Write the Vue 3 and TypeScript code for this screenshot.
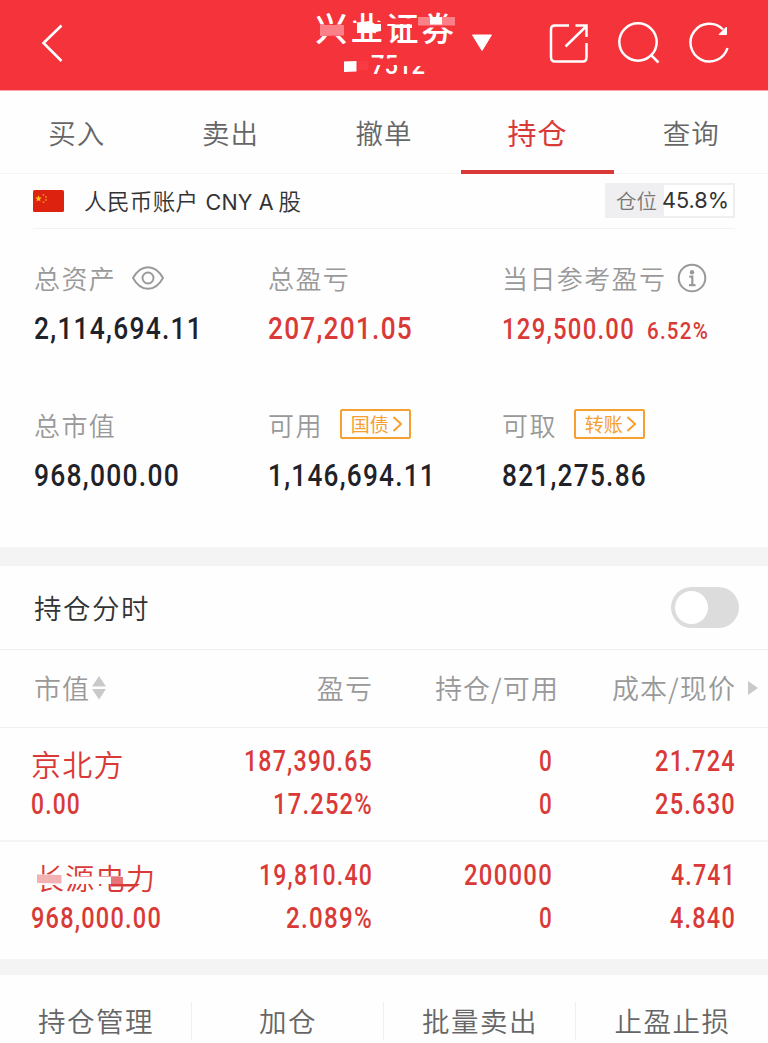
<script setup lang="ts">
interface Figure {
  text: string
  width: number
  height: number
}

interface SummaryItem {
  label: string
  icon?: 'eye' | 'info'
  link?: string
  tone: 'dark' | 'red'
  figures: Figure[]
}

interface Holding {
  name: string
  masked: boolean
  value: Figure
  columns: Figure[][]
}

const tabs: string[] = ['买入', '卖出', '撤单', '持仓', '查询']
const activeTab = '持仓'
const actions: string[] = ['持仓管理', '加仓', '批量卖出', '止盈止损']

const fig = (text: string, width: number, height = 20.5): Figure => ({ text, width, height })

const summary: SummaryItem[] = [
  { label: '总资产', icon: 'eye', tone: 'dark', figures: [fig('2,114,694.11', 169, 22.5)] },
  { label: '总盈亏', tone: 'red', figures: [fig('207,201.05', 145, 22.5)] },
  { label: '当日参考盈亏', icon: 'info', tone: 'red', figures: [fig('129,500.00', 133, 20.5), fig('6.52%', 62, 17.5)] },
  { label: '总市值', tone: 'dark', figures: [fig('968,000.00', 146, 22.5)] },
  { label: '可用', link: '国债', tone: 'dark', figures: [fig('1,146,694.11', 168, 22.5)] },
  { label: '可取', link: '转账', tone: 'dark', figures: [fig('821,275.86', 145, 22.5)] },
]

const holdings: Holding[] = [
  {
    name: '京北方',
    masked: false,
    value: fig('0.00', 50),
    columns: [
      [fig('187,390.65', 129), fig('17.252%', 100)],
      [fig('0', 14), fig('0', 14)],
      [fig('21.724', 81), fig('25.630', 81)],
    ],
  },
  {
    name: '长源电力',
    masked: true,
    value: fig('968,000.00', 131),
    columns: [
      [fig('19,810.40', 114), fig('2.089%', 87)],
      [fig('200000', 89), fig('0', 14)],
      [fig('4.741', 65), fig('4.840', 66)],
    ],
  },
]
</script>

<template>
  <div class="page">
    <header class="top">
      <svg class="back" width="24" height="42" viewBox="0 0 24 42">
        <path d="M21.500 5.500 3.500 23 21.500 41" fill="none" stroke="#fff" stroke-width="2.600" />
      </svg>
      <div class="broker">
        <div class="broker-name">兴业证券</div>
        <svg class="broker-no" width="56" height="18">
          <text x="0" y="18" textLength="54" lengthAdjust="spacingAndGlyphs" font-size="25">7512</text>
        </svg>
        <svg class="mask" width="150" height="80" viewBox="310 0 150 80">
          <g fill="#f5333b">
            <path d="M315 24.500h32v11.500h-32zM352 14h7v4h-7zM352 23h5v15h-5zM376 22h8v5h-8zM377 33h8v5h-8z" />
            <path d="M386 18.500h34v5.500h-34zM410 24h7v6h-7z" />
            <path d="M418 24.500h38v3h-38z" />
            <path d="M368 58.500h60v6.500h-60zM397 54h30v12h-30z" />
          </g>
          <path d="M320 25h24v10.500l-24 .5z" fill="#fb8087" />
          <path d="M357 22.500 370 21l5 3h6v7l-11 2-13 0z" fill="#fff" />
          <path d="M394 24.500h18v3.500h-18z" fill="#fff" />
          <path d="M418 17h37v8.500h-37z" fill="#fb8087" />
          <path d="M430 17h12v7.500h-12z" fill="#fff" />
          <path d="M344 61.500 356.500 61v10.500L344 72z" fill="#fff" />
          <path d="M358 61h10v9h-10z" fill="#f83b43" />
        </svg>
      </div>
      <svg class="caret" width="22" height="18" viewBox="0 0 22 18">
        <path d="M1.500 1h19L11 16.500z" fill="#fff" stroke="#fff" stroke-width="1" stroke-linejoin="round" />
      </svg>
      <svg class="tools" width="182" height="46" viewBox="548 20 182 46" fill="none" stroke="#fff" stroke-width="2.500">
        <path d="M569 25.500H555q-4 0-4 4V57q0 4.500 4 4.500h28q3.500 0 3.500-4.500V43" />
        <path d="M575.500 25.500h11V37M586 26.500 565.500 46.500" />
        <circle cx="638" cy="42" r="18.700" />
        <path d="m651 55 7.500 7.500" />
        <path d="M727.500 48a18.900 18.900 0 1 1-4.500-18.500" />
        <path d="M726.500 27v7.500H719z" fill="#fff" stroke-width="1" />
      </svg>
    </header>

    <nav class="tabs">
      <div v-for="t in tabs" :key="t" class="tab" :class="{ active: t === activeTab }">{{ t }}</div>
    </nav>

    <section class="account">
      <svg class="flag" width="31" height="22" viewBox="0 0 31 22">
        <rect width="31" height="22" rx="1.500" fill="#dd2310" />
        <path d="m5.500 5.300.9 2.200 2.400.1-1.900 1.600.6 2.400-2-1.300-2 1.300.6-2.400-1.900-1.600 2.400-.1z" fill="#ffc21a" />
        <g fill="#f08a1c">
          <circle cx="10.500" cy="5" r=".9" /><circle cx="13" cy="7" r=".9" />
          <circle cx="13" cy="10" r=".9" /><circle cx="10.500" cy="12.200" r=".9" />
        </g>
      </svg>
      <span class="account-name">人民币账户</span>
      <span class="account-type"><span class="latin">CNY A</span>股</span>
      <div class="ratio">
        <span class="ratio-label">仓位</span>
        <span class="ratio-value">45.8%</span>
      </div>
    </section>

    <section class="summary">
      <div v-for="s in summary" :key="s.label" class="cell">
        <div class="cell-head">
          <span class="cell-label">{{ s.label }}</span>
          <svg v-if="s.icon === 'eye'" class="eye" width="32" height="24" viewBox="0 0 32 24" fill="none" stroke="#999" stroke-width="1.900">
            <path d="M1 12Q7 1.200 16 1.200T31 12Q25 22.800 16 22.800T1 12z" />
            <circle cx="16" cy="12" r="5.500" />
          </svg>
          <svg v-if="s.icon === 'info'" class="info" width="30" height="30" viewBox="0 0 30 30">
            <circle cx="15" cy="15" r="13.300" fill="none" stroke="#999" stroke-width="2" />
            <circle cx="15" cy="9.300" r="2.200" fill="#999" />
            <path d="M12.300 13.700h3v8M12 22.200h6.500" fill="none" stroke="#999" stroke-width="2.200" />
          </svg>
          <span v-if="s.link" class="link">
            {{ s.link }}
            <svg width="11" height="18" viewBox="0 0 11 18">
              <path d="m1.500 2 7.500 7-7.500 7" fill="none" stroke="#f5a031" stroke-width="2" />
            </svg>
          </span>
        </div>
        <div class="figures" :class="s.tone">
          <svg v-for="f in s.figures" :key="f.text" class="num" :width="f.width" :height="f.height">
            <text x="0" :y="f.height" :textLength="f.width" lengthAdjust="spacingAndGlyphs" :font-size="f.height / 0.711">{{ f.text }}</text>
          </svg>
        </div>
      </div>
    </section>

    <section class="switch-row">
      <span>持仓分时</span>
      <div class="switch"><div class="knob"></div></div>
    </section>

    <section class="table-head">
      <div class="th first">
        市值
        <svg class="sort" width="14" height="24" viewBox="0 0 14 24" fill="#c9c9c9">
          <path d="M7 0l7 10.500H0zM0 13h14L7 23.500z" />
        </svg>
      </div>
      <div class="th">盈亏</div>
      <div class="th">持仓/可用</div>
      <div class="th">成本/现价</div>
      <svg class="more" width="10" height="14" viewBox="0 0 10 14"><path d="M0 0l10 7-10 7z" fill="#c9c9c9" /></svg>
    </section>

    <section v-for="h in holdings" :key="h.name" class="holding">
      <div class="stock">
        <div class="stock-name" :class="{ masked: h.masked }">
          {{ h.name }}
          <svg v-if="h.masked" class="stock-mask" width="125" height="36" viewBox="31 861 125 36">
            <path d="M31 874.500h31l2 2h58v7.500H66l-4 1H31z" fill="#fefefe" />
            <path d="M37 874.500 61.500 875v8.500L37 883z" fill="#f2b1b3" />
            <path d="M111 877h12v7h-12z" fill="#e57578" />
            <path d="M111 884h29l-3 2.500h-26z" fill="#d93a38" />
          </svg>
        </div>
        <svg class="num" :width="h.value.width" :height="h.value.height">
          <text x="0" :y="h.value.height" :textLength="h.value.width" lengthAdjust="spacingAndGlyphs" :font-size="h.value.height / 0.711">{{ h.value.text }}</text>
        </svg>
      </div>
      <div v-for="(col, i) in h.columns" :key="i" class="pair">
        <svg v-for="(f, j) in col" :key="j" class="num" :width="f.width" :height="f.height">
          <text x="0" :y="f.height" :textLength="f.width" lengthAdjust="spacingAndGlyphs" :font-size="f.height / 0.711">{{ f.text }}</text>
        </svg>
      </div>
    </section>

    <footer class="actions">
      <div v-for="a in actions" :key="a" class="action">{{ a }}</div>
    </footer>
  </div>
</template>

<style>
body {
  background: #fff;
}
</style>

<style scoped>
.page {
  width: 768px;
  height: 1043px;
  overflow: hidden;
  background: #fefefe;
  font-family: "Noto Sans CJK SC", sans-serif;
  font-weight: 350;
  box-sizing: border-box;
  white-space: nowrap;
}
.page * {
  box-sizing: border-box;
}
.page svg {
  display: block;
  flex: none;
}
.top {
  height: 91px;
  background: #f5333b;
  border-bottom: 1px solid #f9a5ae;
  display: flex;
  align-items: flex-start;
}
.back {
  margin: 20px 0 0 40px;
}
.broker {
  position: relative;
  width: 150px;
  height: 80px;
  margin-left: 246px;
  color: #fff;
}
.broker-name {
  height: 56px;
  line-height: 53px;
  padding-left: 5px;
  font-size: 32.500px;
  font-weight: 500;
  letter-spacing: 3px;
}
.page .broker-no {
  margin-left: 61px;
  overflow: visible;
  font-family: Roboto, sans-serif;
  font-weight: 500;
  fill: #fff;
}
.mask {
  position: absolute;
  left: 0;
  top: 0;
}
.caret {
  margin: 34px 0 0 11px;
}
.tools {
  margin: 20px 0 0 55px;
}
.tabs {
  height: 83px;
  display: grid;
  grid-template-columns: repeat(5, 1fr);
  border-bottom: 1px solid #f5f5f5;
}
.tab {
  height: 83px;
  line-height: 82px;
  text-align: center;
  font-size: 27.500px;
  letter-spacing: 1px;
  color: #666;
}
.tab.active {
  color: #d93a38;
  font-size: 29px;
  font-weight: 400;
  border-bottom: 4px solid #d93a38;
}
.account {
  height: 55px;
  margin: 0 33px;
  display: flex;
  align-items: center;
  border-bottom: 1px solid #f1f1f1;
  color: #333;
}
.flag {
  margin-bottom: 1px;
}
.account-name {
  margin: 0 0 2px 20px;
  font-size: 22.500px;
  letter-spacing: 0.400px;
}
.account-type {
  margin: 0 0 2px 7px;
  font-size: 22.500px;
}
.latin {
  display: inline-block;
  width: 73px;
  font-family: Inter, sans-serif;
  font-size: 21.500px;
  font-weight: 400;
  letter-spacing: 0.200px;
}
.ratio {
  margin: 0 0 2px auto;
  width: 130px;
  height: 35px;
  border: 2px solid #efeff2;
  background: #fff;
  display: flex;
  align-items: center;
  line-height: 31px;
}
.ratio-label {
  width: 57px;
  padding-left: 9px;
  background: #efeff2;
  font-size: 20.500px;
  color: #777;
}
.ratio-value {
  margin-left: -2px;
  font-family: Inter, sans-serif;
  font-size: 21.700px;
  font-weight: 400;
}
.summary {
  height: 318px;
  padding: 31px 0 0 34px;
  display: grid;
  grid-template-columns: 234px 234px 1fr;
  grid-auto-rows: 147px;
}
.cell-head {
  height: 36px;
  display: flex;
  align-items: center;
  color: #999;
}
.cell-label {
  margin-bottom: 2px;
  font-size: 26px;
  letter-spacing: 1.400px;
}
.eye {
  margin-left: 16px;
}
.info {
  margin-left: 11px;
}
.link {
  display: flex;
  align-items: center;
  justify-content: space-between;
  width: 71px;
  height: 30px;
  margin: 0 0 3px 17px;
  padding: 0 6px 0 9px;
  border: 2px solid #f5a031;
  border-radius: 2px;
  color: #f5a031;
  font-size: 19px;
  font-weight: 400;
}
.figures {
  display: flex;
  align-items: flex-end;
  gap: 12px;
  height: 22.500px;
  margin-top: 19.500px;
}
.num {
  overflow: visible;
  font-family: Roboto, sans-serif;
  font-weight: 500;
  letter-spacing: 1.500px;
}
.dark {
  fill: #1f2329;
}
.red {
  fill: #d93a38;
}
.switch-row {
  height: 103px;
  padding: 0 29px 1px 34px;
  border-top: 19px solid #f4f4f4;
  border-bottom: 1px solid #f1f1f1;
  display: flex;
  align-items: center;
  justify-content: space-between;
  font-size: 27.500px;
  letter-spacing: 1.500px;
  color: #333;
}
.switch {
  width: 68px;
  height: 41px;
  padding: 4px;
  border-radius: 21px;
  background: #dcdcdc;
}
.knob {
  width: 33px;
  height: 33px;
  border-radius: 50%;
  background: #fff;
}
.table-head {
  height: 78px;
  padding: 0 0 2px 34px;
  display: grid;
  grid-template-columns: 166px 173px 186px 177px 1fr;
  align-items: center;
  border-bottom: 1px solid #f0f0f0;
  font-size: 27px;
  letter-spacing: 1.100px;
  color: #999;
}
.th {
  text-align: right;
}
.th.first {
  display: flex;
  align-items: center;
}
.sort {
  margin-left: 2px;
}
.more {
  margin-left: 12px;
}
.holding {
  height: 114px;
  padding: 22px 33px 0 31px;
  display: grid;
  grid-template-columns: 169px 173px 180px 183px;
  border-bottom: 2px solid #f4f4f4;
  fill: #d93a38;
}
.holding:nth-last-child(2) {
  height: 117px;
  border-bottom: 0;
}
.stock-name {
  position: relative;
  height: 43px;
  line-height: 27px;
  font-size: 30px;
  letter-spacing: 1.300px;
  color: #d93a38;
}
.stock-name.masked {
  padding-left: 4px;
  font-size: 29px;
}
.stock-mask {
  position: absolute;
  left: 0;
  top: -3px;
}
.pair {
  display: flex;
  flex-direction: column;
  align-items: flex-end;
  gap: 22.500px;
}
.actions {
  height: 84px;
  border-top: 16px solid #f4f4f4;
  padding-top: 27px;
  display: grid;
  grid-template-columns: repeat(4, 1fr);
}
.action {
  height: 38px;
  line-height: 37px;
  padding-left: 1px;
  text-align: center;
  border-right: 1px solid #f0f0f0;
  font-size: 27.500px;
  letter-spacing: 1.500px;
  color: #666;
}
.action:last-child {
  border-right: 0;
}
</style>
